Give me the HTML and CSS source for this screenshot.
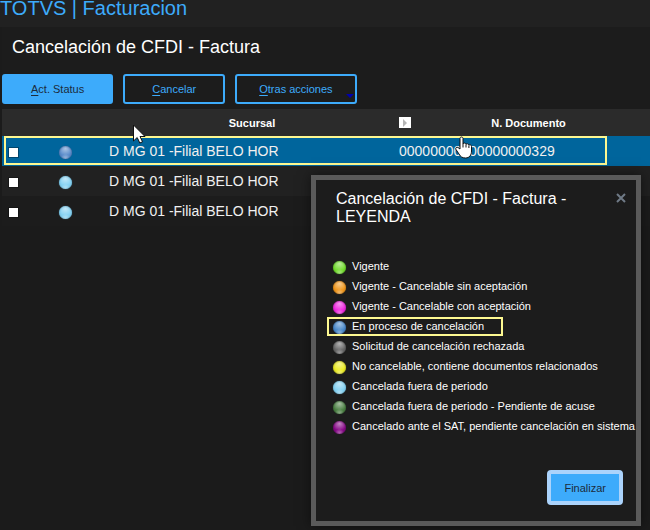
FILE: index.html
```html
<!DOCTYPE html>
<html lang="es">
<head>
  <meta charset="utf-8">
  <title>TOTVS | Facturacion</title>
  <link rel="stylesheet" href="styles.css">
</head>
<body>
  <header class="topbar">TOTVS | Facturacion</header>

  <main class="content">
    <h1>Cancelación de CFDI - Factura</h1>

    <div class="toolbar">
      <button type="button" class="btn btn-primary"><u>A</u>ct. Status</button>
      <button type="button" class="btn btn-cancel"><u>C</u>ancelar</button>
      <button type="button" class="btn btn-more"><u>O</u>tras acciones</button>
    </div>

    <div class="grid">
      <table>
        <colgroup>
          <col class="col-check">
          <col class="col-status">
          <col class="col-branch">
          <col>
        </colgroup>
        <thead>
          <tr>
            <th></th>
            <th></th>
            <th>Sucursal</th>
            <th>
              <div class="doc-head">
                <svg class="expand" width="12" height="11" viewBox="0 0 12 11"><rect width="12" height="11" fill="#fff"/><path d="M4 2l4 4-4 4z" fill="#b5b5b5"/></svg>
                <span>N. Documento</span>
              </div>
            </th>
          </tr>
        </thead>
        <tbody>
          <tr class="selected">
            <td><input type="checkbox" aria-label="Seleccionar fila 1"></td>
            <td class="status"><span class="ball steel"></span></td>
            <td>D MG 01 -Filial BELO HOR</td>
            <td class="doc">00000000000000000329</td>
          </tr>
          <tr>
            <td><input type="checkbox" aria-label="Seleccionar fila 2"></td>
            <td class="status"><span class="ball sky"></span></td>
            <td>D MG 01 -Filial BELO HOR</td>
            <td class="doc"></td>
          </tr>
          <tr>
            <td><input type="checkbox" aria-label="Seleccionar fila 3"></td>
            <td class="status"><span class="ball sky"></span></td>
            <td>D MG 01 -Filial BELO HOR</td>
            <td class="doc"></td>
          </tr>
        </tbody>
      </table>
      <div class="row-mark"></div>
    </div>
  </main>

  <!-- Leyenda -->
  <section class="dialog" role="dialog" aria-labelledby="legendTitle">
    <div class="dialog-head">
      <h2 id="legendTitle">Cancelación de CFDI - Factura - LEYENDA</h2>
      <button type="button" class="close" aria-label="Cerrar">
        <svg width="10" height="10" viewBox="0 0 10 10"><path d="M1 1l8 8M9 1l-8 8" stroke="#6f7a86" stroke-width="2"/></svg>
      </button>
    </div>
    <ul class="legend">
      <li><span class="ball green"></span>Vigente</li>
      <li><span class="ball orange"></span>Vigente - Cancelable sin aceptación</li>
      <li><span class="ball pink"></span>Vigente - Cancelable con aceptación</li>
      <li class="marked"><span class="ball blue"></span>En proceso de cancelación</li>
      <li><span class="ball gray"></span>Solicitud de cancelación rechazada</li>
      <li><span class="ball yellow"></span>No cancelable, contiene documentos relacionados</li>
      <li><span class="ball sky"></span>Cancelada fuera de periodo</li>
      <li><span class="ball moss"></span>Cancelada fuera de periodo - Pendiente de acuse</li>
      <li><span class="ball purple"></span>Cancelado ante el SAT, pendiente cancelación en sistema</li>
    </ul>
    <div class="dialog-foot">
      <button type="button" class="btn-finish">Finalizar</button>
    </div>
  </section>

  <!-- Punteros -->
  <svg class="pointer arrow" width="13" height="20" viewBox="0 0 13 20"><path d="M.5 1v16l3.700-3.500 2.600 5.500 2.700-1.200-2.500-5.300h5z" fill="#fff" stroke="#111"/></svg>
  <svg class="pointer hand" width="18" height="23" viewBox="0 0 18 23"><path d="M5 13V2.500C5 .5 8 .5 8 2.500V8c.3-1.300 2.800-1.200 3 .4.500-1.100 2.700-.8 2.900.8.700-.9 2.600-.4 2.600 1.200V15c0 4-2 7-6 7-3.500 0-5-1.500-6.500-4L1 13.500c-1-1.700 1-3 2.300-1.700z" fill="#fff" stroke="#111"/><path d="M8 8v3.500M11 8.500v3M13.900 9.500v2.500" stroke="#111" fill="none"/></svg>
</body>
</html>
```
FILE: styles.css
```css
body {
  position: relative;
  margin: 0;
  min-height: 100vh;
  background: #1b1b1b;
  color: #fff;
  font-family: "Liberation Sans", Arial, sans-serif;
}

.topbar {
  padding-bottom: 11px;
  line-height: 16px;
  font-size: 20px;
  color: #3dabfb;
  background: #212121;
}

.content {
  margin-left: 2px;
  background: #1c1c1c;
}

h1 {
  margin: 0;
  padding: 10px 10px 17px;
  font-size: 18px;
  line-height: 20px;
  font-weight: normal;
}

.toolbar {
  display: flex;
  gap: 10px;
  margin-bottom: 5px;
}

.btn {
  position: relative;
  box-sizing: border-box;
  height: 30px;
  padding: 0 27px;
  border: 2px solid #3dabfb;
  border-radius: 3px;
  background: transparent;
  color: #3dabfb;
  font-family: inherit;
  font-size: 11px;
}

.btn u {
  text-underline-offset: 2px;
}

.btn-primary {
  background: #3dabfb;
  color: #1c2c3c;
}

.btn-more {
  padding: 0 22px;
}

.btn-more::after {
  content: "";
  position: absolute;
  right: 1px;
  bottom: 4px;
  border: 4px solid transparent;
  border-top-color: #00a;
  border-bottom: 0;
}

.grid {
  position: relative;
}

table {
  width: 100%;
  table-layout: fixed;
  border-collapse: collapse;
}

.col-check {
  width: 20px;
}

.col-status {
  width: 87px;
}

.col-branch {
  width: 286px;
}

th,
td {
  padding: 0;
  height: 30px;
}

th {
  height: 27px;
  font-size: 11px;
  background: #2b2b2b;
}

td {
  font-size: 14px;
  color: #f0f0f0;
  background: #1c1c1c;
}

tr:nth-child(2) td {
  background: #212121;
}

.selected td {
  background: #00659c;
}

.doc-head {
  display: flex;
  align-items: center;
  padding: 0 4px;
}

.doc-head span {
  flex: 1;
}

.doc {
  padding-left: 4px;
}

.status {
  text-align: center;
}

input[type="checkbox"] {
  appearance: none;
  display: block;
  width: 9px;
  height: 9px;
  margin: 2px 0 0 7px;
  background: #fff;
  box-shadow: 0 0 0 1px rgba(0, 0, 0, 0.3);
}

.row-mark {
  position: absolute;
  top: 27px;
  left: 2px;
  right: 43px;
  height: 25px;
  border: 2px solid #fdf891;
}

/* esferas de estado */
.ball {
  --c: #888;
  --edge: #444;
  display: inline-block;
  flex: none;
  width: 13px;
  height: 13px;
  border-radius: 50%;
  vertical-align: middle;
  background:
    radial-gradient(circle 7px at 50% 20%, rgba(255, 255, 255, 0.5), transparent),
    radial-gradient(circle 5px at 50% 100%, rgba(255, 255, 255, 0.5), transparent),
    var(--c);
  box-shadow: inset 0 0 2px var(--edge), 0 0 1px var(--edge);
}

.green { --c: #76dc32; --edge: #3c8c10; }
.orange { --c: #f0981f; --edge: #9c5c08; }
.pink { --c: #f02ae0; --edge: #96108c; }
.blue { --c: #4b8aca; --edge: #285080; }
.steel { --c: #5a8ccb; --edge: #3c5c8c; }
.gray { --c: #686868; --edge: #3c3c3c; }
.yellow { --c: #ecec28; --edge: #909010; }
.sky { --c: #86d2f2; --edge: #5898b4; }
.moss { --c: #4c8044; --edge: #284c24; }
.purple { --c: #880a88; --edge: #4c044c; }

.dialog {
  position: absolute;
  top: 175px;
  right: 9px;
  box-sizing: border-box;
  width: 330px;
  border: 5px solid #5a5a5a;
  background: #1c1c1c;
  box-shadow: 0 0 12px rgba(0, 0, 0, 0.5);
}

.dialog-head {
  display: flex;
  justify-content: space-between;
  align-items: flex-start;
  padding: 10px 10px 0 20px;
}

h2 {
  margin: 0;
  font-size: 16px;
  line-height: 18px;
  font-weight: normal;
}

.close {
  display: flex;
  padding: 3px 0;
  border: 0;
  background: none;
}

.legend {
  margin: 0;
  padding: 30px 0 0 11px;
  list-style: none;
  font-size: 11px;
}

.legend li {
  position: relative;
  display: flex;
  align-items: center;
  gap: 6px;
  height: 20px;
  padding-left: 6px;
  white-space: nowrap;
}

.legend .ball {
  margin-top: 2px;
}

.marked::after {
  content: "";
  position: absolute;
  top: 1px;
  left: 0;
  width: 172px;
  height: 15px;
  border: 2px solid #fdf891;
}

.dialog-foot {
  display: flex;
  justify-content: flex-end;
  padding: 34px 13px 16px;
}

.btn-finish {
  box-sizing: border-box;
  height: 35px;
  padding: 0 13px;
  border: 4px solid #abd3fb;
  border-radius: 4px;
  background: #3dabfb;
  color: #1c2c3c;
  font-family: inherit;
  font-size: 11px;
}

.pointer {
  position: absolute;
}

.arrow {
  top: 124px;
  left: 133px;
}

.hand {
  top: 136px;
  left: 455px;
}
```
